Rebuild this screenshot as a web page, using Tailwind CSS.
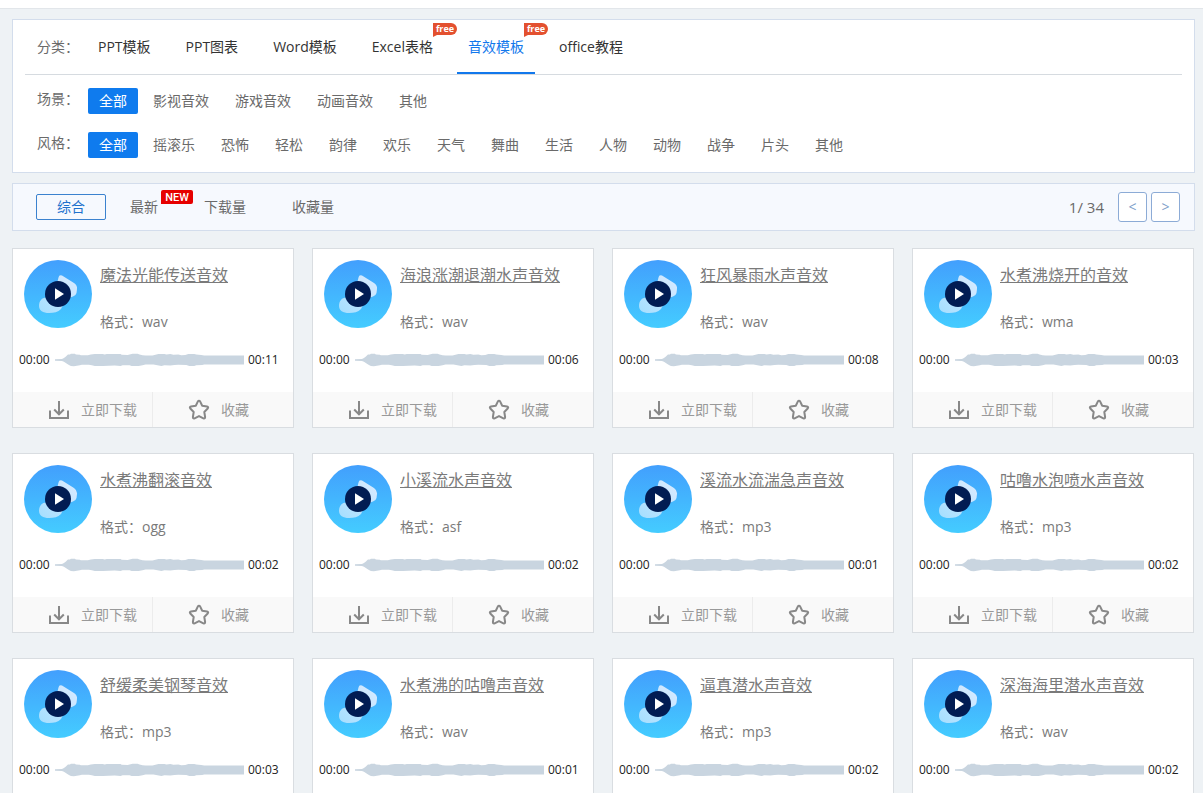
<!DOCTYPE html>
<html lang="zh-CN">
<head>
<meta charset="utf-8">
<meta name="viewport" content="width=device-width, initial-scale=1">
<title>音效模板</title>
<script src="https://cdn.jsdelivr.net/npm/@tailwindcss/browser@4"></script>
</head>
<body class="bg-[#eef2f5] font-['Open_Sans','Noto_Sans_CJK_SC',sans-serif] text-sm text-[#6a6a6a]">
<svg class="absolute size-0" aria-hidden="true">
  <defs>
    <linearGradient id="disc" x1="0" y1="0" x2="0" y2="1">
      <stop offset="0" stop-color="#429ffd"/><stop offset="1" stop-color="#44ccff"/>
    </linearGradient>
    <linearGradient id="note" x1="1" y1="0" x2="0" y2="1">
      <stop offset="0" stop-color="#dcebff"/><stop offset="1" stop-color="#a4defe"/>
    </linearGradient>
  </defs>
  <symbol id="i-disc" viewBox="0 0 68 68">
    <circle cx="34" cy="34" r="34" fill="url(#disc)"/>
    <path d="M34.500 17.500Q35 14.500 38 15.500L50 23Q53.500 25.500 53 29L52.500 33Q52 35.500 49 36.500L42 39 37 49C34 52 30 53 25 53C19 53 15 50.500 15 46C15 41 18 37.500 22 37.500L30 36Z" fill="url(#note)"/>
    <circle cx="34" cy="34" r="13" fill="#021c53"/>
    <path d="M31 28.300V39.700L40 34Z" fill="#fff"/>
  </symbol>
  <symbol id="i-wave" viewBox="0 0 190 14" preserveAspectRatio="none">
    <path fill="#c9d5e0" d="M0 6.300L7 6 9 5 11 3.500 13 1.500 15 1.500 16 .8 20 .8 21 1.500 25 1.700 26 2.300 33 2.300 36 1.500 40 1 48 1 50 1.500 52 1 66 1 67 1.700 73 1.900 76 1.200 78 .8 83 .8 85 1.500 88 2.200 91 2.500 98 2.500 101 1.700 104 1 110 1 112 1.600 116 1 119 1.700 124 1.600 127 2.200 131 2 134 1 140 1 142 1.600 147 1.900 150 2.500 190 2.500 190 11.500 150 11.500 148 12 142 12.200 140 12.900 135 12.900 132 12 124 11.700 120 12 116 12.600 110 12.300 107 12.900 103 12.300 99 11.500 91 11.400 88 12.200 84 13 77 13 75 12.200 68 12.200 66 12.900 60 12.600 48 12.900 40 12.900 37 12.300 34 11.700 27 11.700 25 12.300 22 12.700 19 13.200 16 13 14 12 12 10.700 9 8.800 7 8 0 7.700Z"/>
  </symbol>
  <symbol id="i-down" viewBox="0 0 20 20">
    <path d="M1 10.500V18H19V10.500M10 1V14M5.200 9.500 10 14.300 14.800 9.500" fill="none" stroke="#888" stroke-width="2"/>
  </symbol>
  <symbol id="i-star" viewBox="0 0 22 22">
    <path d="M9.900 2.400Q11 .9 12.100 2.400L14.200 6.700 19 7.500Q20.900 8 19.700 9.500L16.300 13 17.100 18Q17.200 20 15.400 19.400L11 17.100 6.600 19.400Q4.800 20 4.900 18L5.700 13 2.300 9.500Q1.100 8 3 7.500L7.800 6.700Z" fill="none" stroke="#888" stroke-width="2" stroke-linejoin="round"/>
  </symbol>
</svg>

<header class="h-[9px] border-b border-[#e2e6ea] bg-white"></header>

<main class="pt-[10px] pr-2 pb-6 pl-3">
  <section class="border border-[#d3ddec] bg-white px-3 pb-[14px]">
    <nav class="flex h-[55px] items-stretch border-b border-[#d6dbe0] pl-3" aria-label="分类">
      <span class="mr-2 w-[42px] leading-[54px]">分类：</span>
      <div class="flex gap-[13px] leading-[54px] text-[#333]">
        <a href="#" class="px-[11px]">PPT模板</a>
        <a href="#" class="px-[11px]">PPT图表</a>
        <a href="#" class="px-[11px]">Word模板</a>
        <a href="#" class="relative px-[11px]">Excel表格
          <span class="absolute top-[3px] left-full -ml-[11px] h-3 w-6 rounded-r-full bg-[#e3502f] text-center text-[9px] leading-[11px] font-bold text-white">free<svg class="absolute top-3 left-0 h-[2px] w-1" viewBox="0 0 4 2"><path d="M0 0H4L0 2Z" fill="#e3502f"/></svg></span></a>
        <a href="#" class="relative border-b-2 border-[#1278ec] px-[11px] text-[#1278ec]" aria-current="page">音效模板
          <span class="absolute top-[3px] left-full -ml-[11px] h-3 w-6 rounded-r-full bg-[#e3502f] text-center text-[9px] leading-[11px] font-bold text-white">free<svg class="absolute top-3 left-0 h-[2px] w-1" viewBox="0 0 4 2"><path d="M0 0H4L0 2Z" fill="#e3502f"/></svg></span></a>
        <a href="#" class="px-[11px]">office教程</a>
      </div>
    </nav>
    <div class="mt-[13px] flex pl-3">
      <span class="mr-[9px] w-[42px] leading-[22px]">场景：</span>
      <div class="flex flex-wrap gap-x-1 leading-[26px]">
        <a href="#" class="rounded-xs bg-[#0f7bee] px-[11px] text-white">全部</a>
        <a href="#" class="px-[11px]">影视音效</a><a href="#" class="px-[11px]">游戏音效</a><a href="#" class="px-[11px]">动画音效</a><a href="#" class="px-[11px]">其他</a>
      </div>
    </div>
    <div class="mt-[18px] flex pl-3">
      <span class="mr-[9px] w-[42px] leading-[22px]">风格：</span>
      <div class="flex flex-wrap gap-x-1 leading-[26px]">
        <a href="#" class="rounded-xs bg-[#0f7bee] px-[11px] text-white">全部</a>
        <a href="#" class="px-[11px]">摇滚乐</a><a href="#" class="px-[11px]">恐怖</a><a href="#" class="px-[11px]">轻松</a><a href="#" class="px-[11px]">韵律</a><a href="#" class="px-[11px]">欢乐</a><a href="#" class="px-[11px]">天气</a><a href="#" class="px-[11px]">舞曲</a><a href="#" class="px-[11px]">生活</a><a href="#" class="px-[11px]">人物</a><a href="#" class="px-[11px]">动物</a><a href="#" class="px-[11px]">战争</a><a href="#" class="px-[11px]">片头</a><a href="#" class="px-[11px]">其他</a>
      </div>
    </div>
  </section>

  <section class="mt-[10px] flex h-12 items-center border border-[#d3ddec] bg-[#f6f9fe] pr-[14px] pl-[23px]">
    <a href="#" class="w-[70px] rounded-xs border border-[#3b82cf] text-center leading-6 text-[#1f72cd]">综合</a>
    <a href="#" class="relative ml-6 leading-6">最新<span class="absolute -top-[5px] left-full ml-[3px] h-[14px] w-8 rounded-xs rounded-bl-none bg-[#e60000] text-center font-[Roboto] text-[11px] leading-[15px] font-medium text-white">NEW</span></a>
    <a href="#" class="ml-[46px] leading-6">下载量</a>
    <a href="#" class="ml-[46px] leading-6">收藏量</a>
    <span class="mr-[14px] ml-auto text-[15px] leading-6">1/ 34</span>
    <button type="button" aria-label="上一页" class="mr-1 flex h-[30px] w-[29px] items-center justify-center rounded-[3px] border border-[#8cabd6] bg-white text-sm text-[#7f9fcb]">&lt;</button>
    <button type="button" aria-label="下一页" class="flex h-[30px] w-[29px] items-center justify-center rounded-[3px] border border-[#8cabd6] bg-white text-sm text-[#7f9fcb]">&gt;</button>
  </section>

  <section id="cards" class="mt-[17px] mr-px grid grid-cols-4 gap-x-[18px] gap-y-[25px]"></section>
</main>

<script>
const items = [
  ["魔法光能传送音效", "wav", "00:11"], ["海浪涨潮退潮水声音效", "wav", "00:06"],
  ["狂风暴雨水声音效", "wav", "00:08"], ["水煮沸烧开的音效", "wma", "00:03"],
  ["水煮沸翻滚音效", "ogg", "00:02"], ["小溪流水声音效", "asf", "00:02"],
  ["溪流水流湍急声音效", "mp3", "00:01"], ["咕噜水泡喷水声音效", "mp3", "00:02"],
  ["舒缓柔美钢琴音效", "mp3", "00:03"], ["水煮沸的咕噜声音效", "wav", "00:01"],
  ["逼真潜水声音效", "mp3", "00:02"], ["深海海里潜水声音效", "wav", "00:02"]
];
document.getElementById("cards").innerHTML = items.map(([name, format, time]) => `
  <article class="flex h-[180px] flex-col border border-[#d9dde1] bg-white">
    <div class="flex gap-2 pt-[11px] pl-[11px]">
      <button type="button" class="size-[68px] shrink-0" aria-label="播放 ${name}"><svg class="size-full"><use href="#i-disc"/></svg></button>
      <div class="min-w-0 pt-[3px] whitespace-nowrap text-[#7a7a7a]">
        <h2 class="text-base leading-6"><a href="#" class="underline underline-offset-1">${name}</a></h2>
        <p class="mt-[25px] leading-5">格式：${format}</p>
      </div>
    </div>
    <div class="mt-[18px] flex h-5 items-center pr-[14px] pl-[6px] text-xs text-[#222]">
      <span class="w-9">00:00</span>
      <svg class="h-[14px] min-w-0 flex-1" aria-hidden="true"><use href="#i-wave"/></svg>
      <span class="ml-1 w-[31px]">${time}</span>
    </div>
    <div class="mt-auto flex h-[35px] bg-[#f9f9f9] leading-[35px] text-[#999]">
      <button type="button" class="flex w-1/2 items-center gap-3 border-r border-[#ececec] pl-9"><svg class="size-5"><use href="#i-down"/></svg>立即下载</button>
      <button type="button" class="flex w-1/2 items-center gap-[11px] pl-[35px]"><svg class="size-[22px]"><use href="#i-star"/></svg>收藏</button>
    </div>
  </article>`).join("");
</script>
</body>
</html>
